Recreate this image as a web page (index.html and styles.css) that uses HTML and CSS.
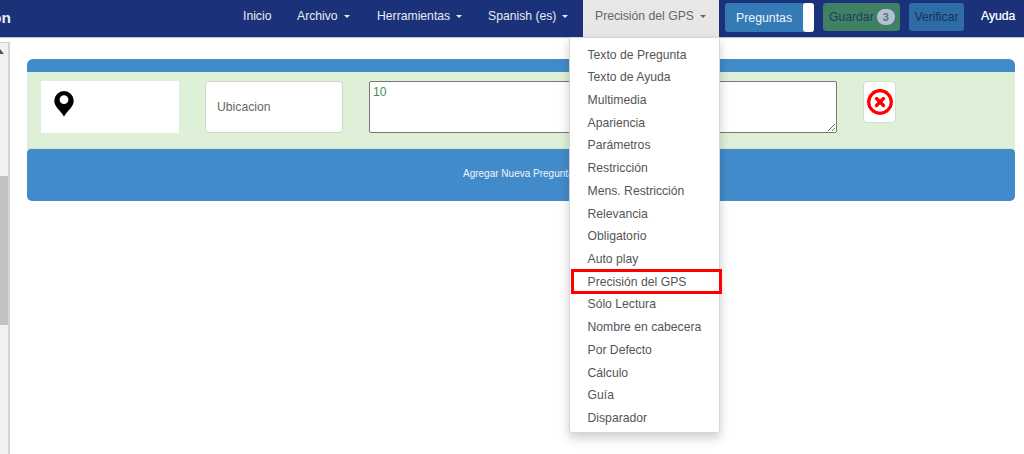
FILE: index.html
```html
<!DOCTYPE html>
<html lang="es">
<head>
<meta charset="utf-8">
<title>Precisión del GPS</title>
<link rel="stylesheet" href="styles.css">
</head>
<body>
<header class="nav">
  <div class="brand">on</div>
  <nav class="links">
    <a class="link l-inicio">Inicio</a>
    <a class="link l-archivo">Archivo<i class="caret"></i></a>
    <a class="link l-herr">Herramientas<i class="caret"></i></a>
    <a class="link l-span">Spanish (es)<i class="caret"></i></a>
    <div class="drop">
      <a class="link active">Precisión del GPS<i class="caret"></i></a>
      <ul class="menu">
        <li>Texto de Pregunta</li>
        <li>Texto de Ayuda</li>
        <li>Multimedia</li>
        <li>Apariencia</li>
        <li>Parámetros</li>
        <li>Restricción</li>
        <li>Mens. Restricción</li>
        <li>Relevancia</li>
        <li>Obligatorio</li>
        <li>Auto play</li>
        <li class="marked">Precisión del GPS</li>
        <li>Sólo Lectura</li>
        <li>Nombre en cabecera</li>
        <li>Por Defecto</li>
        <li>Cálculo</li>
        <li>Guía</li>
        <li>Disparador</li>
      </ul>
    </div>
    <div class="btn preguntas"><span>Preguntas</span><b class="knob"></b></div>
    <div class="btn guardar">Guardar<span class="badge">3</span></div>
    <div class="btn verificar">Verificar</div>
    <a class="link ayuda">Ayuda</a>
  </nav>
</header>
<div class="body">
  <aside class="scroll">
    <svg class="arrow" width="8" height="5" viewBox="0 0 8 5"><path d="M0 5 L4 0 L8 5Z" fill="#555"/></svg>
    <div class="thumb"></div>
  </aside>
  <main class="main">
    <div class="bar"></div>
    <section class="row">
      <div class="iconbox">
        <svg width="20" height="26" viewBox="0 0 20 26">
          <path fill-rule="evenodd" d="M10 25.800 C8.200 21 .3 16.500 .3 9.800 A9.700 9.700 0 0 1 19.700 9.800 C19.700 16.500 11.800 21 10 25.800Z M10 4.300 A4.400 4.400 0 1 0 10 13.100 A4.400 4.400 0 1 0 10 4.300Z" fill="#000"/>
        </svg>
      </div>
      <div class="namebox">Ubicacion</div>
      <textarea class="value">10</textarea>
      <button class="del" aria-label="Eliminar">
        <svg width="26" height="26" viewBox="0 0 26 26">
          <circle cx="13" cy="13" r="11.300" fill="#fff" stroke="#f00" stroke-width="3.200"/>
          <path d="M9.500 9.500 L16.500 16.500 M16.500 9.500 L9.500 16.500" stroke="#f00" stroke-width="3.400" stroke-linecap="round"/>
        </svg>
      </button>
    </section>
    <div class="add">Agregar Nueva Pregunta</div>
  </main>
</div>
</body>
</html>
```

FILE: styles.css
```css
*, *::before, *::after { box-sizing: border-box; }
html, body { margin: 0; padding: 0; }
body {
  width: 1024px;
  height: 454px;
  overflow: hidden;
  background: #fff;
  font-family: "Liberation Sans", Arial, sans-serif;
  font-size: 12.2px;
  color: #333;
}
.nav {
  height: 38px;
  background: #1b327a;
  border-bottom: 1px solid #b9c0d4;
  display: flex;
  justify-content: space-between;
  color: #fff;
}
.brand {
  font-size: 15.500px;
  font-weight: bold;
  line-height: 35px;
  width: 11px;
  overflow: hidden;
  direction: rtl;
  color: #e9ecf5;
}
.links { display: flex; align-items: flex-start; height: 37px; }
.link { display: block; line-height: 32px; color: #e8ebf3; white-space: nowrap; }
.l-inicio { width: 54px; }
.l-archivo { width: 80px; }
.l-herr { width: 111px; }
.l-span { width: 95px; }
.caret {
  display: inline-block;
  width: 0;
  height: 0;
  margin-left: 6px;
  vertical-align: 2px;
  border-top: 3.600px solid currentColor;
  border-left: 3.600px solid transparent;
  border-right: 3.600px solid transparent;
}
.drop { position: relative; margin-right: 6px; }
.active {
  width: 136px;
  height: 37px;
  padding-left: 12px;
  background: #e7e7e7;
  color: #666;
}
.menu {
  position: absolute;
  top: 37px;
  right: -1px;
  width: 151px;
  height: 396px;
  margin: 0;
  padding: 5.500px 0 0;
  list-style: none;
  background: #fff;
  border: 1px solid #d6d6d6;
  border-radius: 0 0 3px 3px;
  box-shadow: 0 5px 11px rgba(0, 0, 0, .2);
  z-index: 5;
}
.menu li {
  height: 22.720px;
  line-height: 22.720px;
  padding-left: 17.500px;
  color: #555;
  white-space: nowrap;
}
.menu li.marked { position: relative; }
.menu li.marked::after {
  content: "";
  position: absolute;
  left: 1px;
  top: -1.500px;
  width: 151px;
  height: 25px;
  border: 3px solid #f00;
}
.btn { border-radius: 3px; white-space: nowrap; }
.preguntas {
  width: 89px;
  height: 29px;
  margin: 3px 9px 0 0;
  background: #337ab7;
  display: flex;
  justify-content: space-between;
  line-height: 30px;
  padding-left: 11px;
  font-size: 12.300px;
  color: #f0f4fa;
}
.knob {
  width: 11px;
  background: #fff;
  border-radius: 3px;
}
.guardar {
  width: 77px;
  height: 28px;
  margin: 3px 9px 0 0;
  background: #418163;
  border: 1px solid #3f7f68;
  color: #1f3a63;
  line-height: 26px;
  padding-left: 5px;
  display: flex;
  align-items: center;
}
.badge {
  width: 18px;
  height: 16px;
  margin-left: 3px;
  border-radius: 8px;
  background: #b8bed6;
  color: #418163;
  font-size: 11px;
  font-weight: bold;
  text-align: center;
  line-height: 16px;
}
.verificar {
  width: 55px;
  height: 28px;
  margin: 3px 17px 0 0;
  background: #2d6ca6;
  color: #173259;
  line-height: 28px;
  text-align: center;
}
.ayuda { width: 43px; color: #f2f4f9; text-shadow: 0 0 .6px #fff; }
.body { display: flex; align-items: flex-start; }
.scroll {
  width: 10px;
  height: 416px;
  margin-top: 4px;
  background: #f1f1f1;
  border-right: 2px solid #d4d4d4;
  border-top: 1px solid #d4d4d4;
  padding-top: 6px;
}
.arrow { display: block; margin-left: -4px; }
.thumb { height: 149px; margin-top: 122px; background: #c1c1c1; }
.main { width: 988px; margin: 21px 0 0 17px; }
.bar { height: 13px; background: #428bca; border-radius: 6px 6px 0 0; }
.row {
  height: 77px;
  background: #dff0d8;
  border-bottom: 1px solid #d4e6cc;
  padding: 9px 0 0 14px;
  display: flex;
  align-items: flex-start;
}
.iconbox {
  width: 138px;
  height: 52px;
  background: #fff;
  padding: 10px 0 0 13px;
  margin-right: 26px;
}
.iconbox svg { display: block; }
.namebox {
  width: 138px;
  height: 52px;
  background: #fff;
  border: 1px solid #ced6ca;
  border-radius: 4px;
  color: #666;
  line-height: 51px;
  padding-left: 11px;
  margin-right: 26px;
}
.value {
  width: 468px;
  height: 52px;
  margin: 0 26px 0 0;
  padding: 3px 3px;
  border: 1px solid #767676;
  border-radius: 2px;
  background: #fff;
  font: 12.200px "Liberation Sans", Arial, sans-serif;
  color: #4f8a4f;
  display: block;
}
.del {
  width: 33px;
  height: 42px;
  padding: 7px 0 0;
  background: #fff;
  border: 1px solid #d5dcd0;
  border-radius: 4px;
  display: flex;
  justify-content: center;
  align-items: flex-start;
}
.del svg { display: block; }
.add {
  height: 52px;
  background: #428bca;
  border-radius: 4px 4px 5px 5px;
  color: #f0f5fa;
  font-size: 10px;
  line-height: 50px;
  padding-left: 436px;
}
```
